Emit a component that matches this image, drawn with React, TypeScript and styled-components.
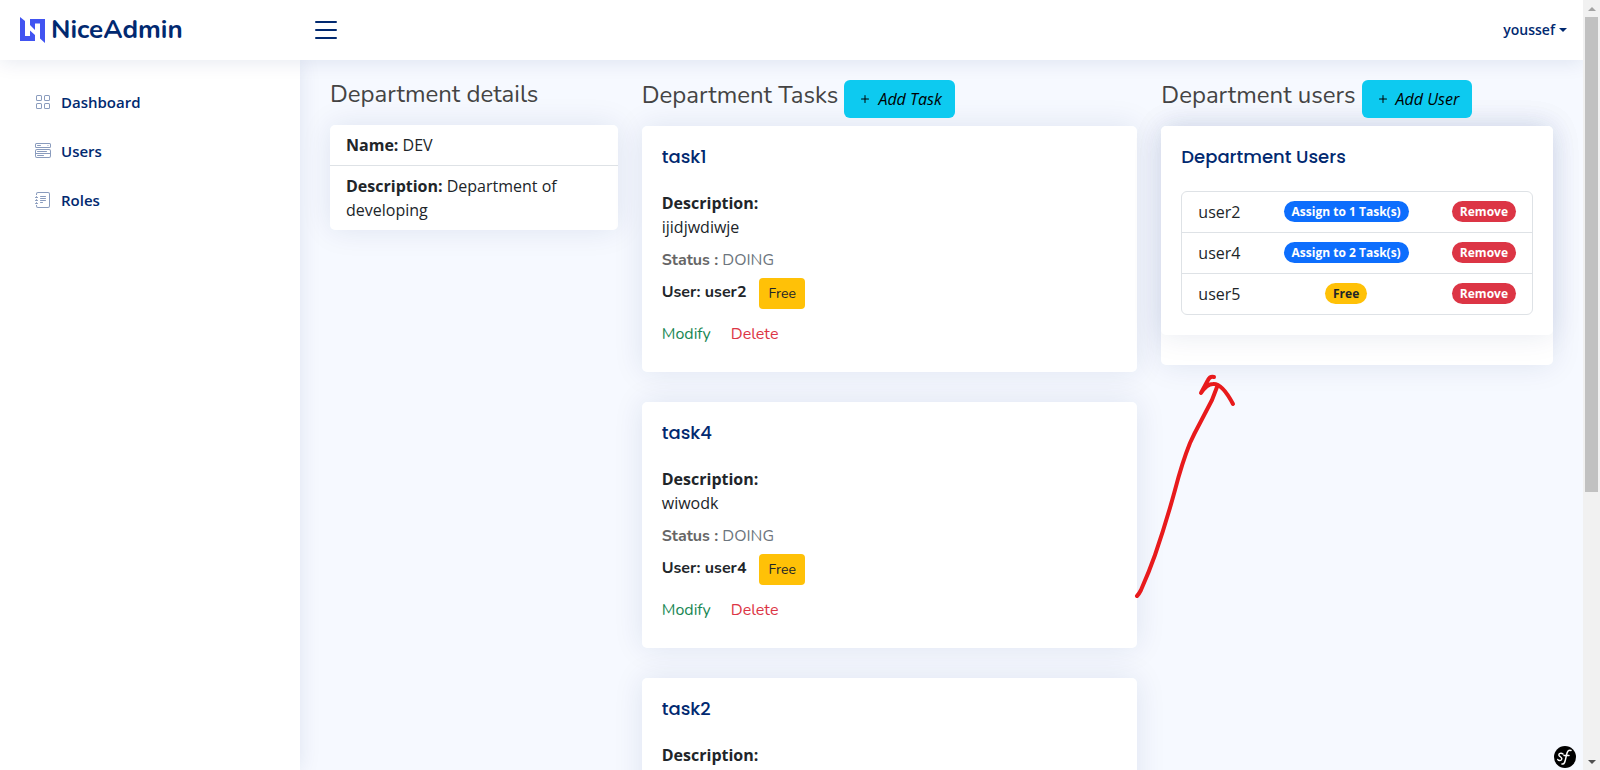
import React from 'react';
import styled, { createGlobalStyle } from 'styled-components';
import { BsGrid, BsMenuButtonWide, BsJournalText, BsList, BsPlus } from 'react-icons/bs';

const body = '"Open Sans", "Noto Sans", sans-serif';
const rounded = 'Nunito, "Open Sans", "Noto Sans", sans-serif';
const geometric = 'Poppins, Inter, "Open Sans", sans-serif';
const cardShadow = '0 0 30px rgba(1, 41, 112, 0.1)';

const GlobalStyle = createGlobalStyle`
  *, *::before, *::after { box-sizing: border-box; }
  body {
    margin: 0;
    background: #f6f9ff;
    color: #212529;
    font: 400 16px/24px ${body};
    overflow: hidden;
  }
  h1, h2, h3, p, ul { margin: 0; padding: 0; }
  ul { list-style: none; }
  a { text-decoration: none; }
  button { font-family: inherit; border: 0; cursor: pointer; }
`;

const Shell = styled.div`
  display: grid;
  grid-template-columns: 1fr 17px;
  height: 100vh;
`;

const Page = styled.div`
  display: grid;
  grid-template: 60px minmax(0, 1fr) / 300px minmax(0, 1fr);
  min-height: 0;
  position: relative;
  overflow: hidden;
`;

const Header = styled.header`
  grid-column: 1 / -1;
  display: flex;
  align-items: center;
  padding: 0 16px 0 20px;
  background: #fff;
  box-shadow: 0 2px 20px rgba(1, 41, 112, 0.1);
  z-index: 3;
`;

const Brand = styled.a`
  display: flex;
  align-items: center;
  gap: 6px;
  width: 290px;
  color: #012970;
  font: 700 26px/30px ${rounded};
`;

const MenuButton = styled.button`
  display: flex;
  padding: 0;
  background: none;
  color: #012970;
`;

const Account = styled.button`
  display: flex;
  align-items: center;
  gap: 4px;
  margin-left: auto;
  padding: 0;
  background: none;
  color: #012970;
  font-size: 14px;
  font-weight: 600;
  line-height: 24px;
`;

const Caret = styled.span`
  border: 4px solid transparent;
  border-top-color: currentColor;
  border-bottom: 0;
`;

const Sidebar = styled.nav`
  padding: 20px;
  background: #fff;
  box-shadow: 0 0 20px rgba(1, 41, 112, 0.1);
  z-index: 2;
`;

const NavList = styled.ul`
  display: grid;
  gap: 5px;
`;

const NavLink = styled.a`
  display: flex;
  align-items: center;
  gap: 10px;
  height: 44px;
  padding: 0 15px;
  color: #012970;
  font-size: 15px;
  font-weight: 600;

  svg { color: #899bbd; }
`;

const Main = styled.main`
  display: grid;
  grid-template-columns: 3fr 5fr 4fr;
  align-items: start;
  padding: 20px 18px;
  min-height: 0;
  overflow-y: auto;
  scrollbar-width: none;
`;

const Column = styled.section`
  position: relative;
  min-width: 0;
  padding: 0 12px;
`;

const ColumnHead = styled.div`
  display: flex;
  align-items: center;
  gap: 6px;
  margin-bottom: 8px;
`;

const Heading = styled.h1`
  padding-bottom: 8px;
  color: #444;
  font: 400 24px/29px ${rounded};
  white-space: nowrap;
`;

const AddButton = styled.button`
  display: flex;
  align-items: center;
  gap: 5px;
  height: 38px;
  padding: 0 13px;
  border-radius: 6px;
  background: #0dcaf0;
  color: #000;
  font-size: 16px;
  font-style: italic;
  font-weight: 400;
  white-space: nowrap;
`;

const Details = styled.ul`
  border-radius: 5px;
  background: #fff;
  box-shadow: ${cardShadow};
`;

const Detail = styled.li`
  padding: 8px 16px;

  & + & { border-top: 1px solid #dee2e6; }
`;

const Strong = styled.strong`
  font-weight: 700;
`;

const Card = styled.article`
  margin-bottom: 30px;
  padding: 0 20px 20px;
  border-radius: 5px;
  background: #fff;
  box-shadow: ${cardShadow};
`;

const CardTitle = styled.h2`
  padding: 20px 0 23px;
  color: #012970;
  font: 500 18px/22px ${geometric};
`;

const Status = styled.p`
  margin-top: 8px;
  color: #6c757d;
  font-family: ${rounded};
  line-height: 26px;

  strong { color: #666; font-weight: 700; }
`;

const UserRow = styled.div`
  display: flex;
  gap: 13px;
  margin: 5px 0 13px;
  font: 700 16px/28px ${rounded};
`;

const FreeButton = styled.button`
  height: 31px;
  padding: 0 9px;
  border-radius: 4px;
  background: #ffc107;
  color: #212529;
  font: 400 14px/21px ${rounded};
`;

const Actions = styled.div`
  display: flex;
  gap: 20px;
  padding-bottom: 6px;
`;

const Action = styled.a<{ $color: string }>`
  color: ${(p) => p.$color};
  font: 400 16px/24px ${rounded};
`;

const UsersWrap = styled.div`
  padding-bottom: 30px;
  border-radius: 5px;
  background: #fff;
  box-shadow: ${cardShadow};

  ${Card} { margin: 0; }
`;

const UserList = styled.ul`
  border: 1px solid #dee2e6;
  border-radius: 6px;
`;

const UserItem = styled.li`
  display: flex;
  align-items: flex-start;
  justify-content: space-between;
  padding: 8px 16px;

  & + & { border-top: 1px solid #dee2e6; }
`;

const pill = `
  margin-top: 1px;
  padding: 4px 8px;
  border-radius: 12px;
  font: 700 12px/13px ${body};
`;

const Badge = styled.span<{ $free?: boolean }>`
  ${pill}
  background: ${(p) => (p.$free ? '#ffc107' : '#0d6efd')};
  color: ${(p) => (p.$free ? '#212529' : '#fff')};
`;

const RemoveButton = styled.button`
  ${pill}
  background: #dc3545;
  color: #fff;
`;

const Arrow = styled.svg`
  position: absolute;
  left: -19px;
  top: 290px;
  z-index: 1;
  pointer-events: none;
`;

const DebugBadge = styled.button`
  position: absolute;
  right: 7px;
  bottom: 2px;
  display: flex;
  padding: 0;
  background: none;
  z-index: 4;
`;

const ScrollTrack = styled.div`
  display: grid;
  grid-template-rows: 17px minmax(0, 475fr) minmax(0, 261fr) 17px;
  justify-items: center;
  background: #f1f1f1;
`;

const ScrollThumb = styled.div`
  width: 13px;
  background: #c1c1c1;
`;

const ScrollArrow = styled.span<{ $down?: boolean }>`
  align-self: center;
  border: 4px solid transparent;
  ${(p) =>
    p.$down
      ? 'grid-row: 4; border-top-color: #505050; border-bottom: 0;'
      : 'border-bottom-color: #a3a3a3; border-top: 0;'}
`;

const tasks = [
  { name: 'task1', description: 'ijidjwdiwje', status: 'DOING', user: 'user2' },
  { name: 'task4', description: 'wiwodk', status: 'DOING', user: 'user4' },
  { name: 'task2', description: 'wiwodk', status: 'DOING', user: 'user4' },
];

const users = [
  { name: 'user2', tasks: 1 },
  { name: 'user4', tasks: 2 },
  { name: 'user5', tasks: 0 },
];

const nav = [
  { label: 'Dashboard', Icon: BsGrid },
  { label: 'Users', Icon: BsMenuButtonWide },
  { label: 'Roles', Icon: BsJournalText },
];

const Logo = () => (
  <svg width="25" height="26" viewBox="0 0 25 26" aria-hidden="true">
    <path fill="#4154f1" d="M0 0 5 4V19H10V13.500L15 18V24H0Z" />
    <path fill="#4154f1" d="M10 2H25V26L20 21.500V6.500H15V13L10 8Z" />
  </svg>
);

export default function App() {
  return (
    <>
      <GlobalStyle />
      <Shell>
        <Page>
          <Header>
            <Brand href="#"><Logo />NiceAdmin</Brand>
            <MenuButton aria-label="Toggle sidebar"><BsList size={32} /></MenuButton>
            <Account>youssef<Caret /></Account>
          </Header>
          <Sidebar>
            <NavList>
              {nav.map(({ label, Icon }) => (
                <li key={label}><NavLink href="#"><Icon size={16} />{label}</NavLink></li>
              ))}
            </NavList>
          </Sidebar>
          <Main>
            <Column>
              <ColumnHead><Heading>Department details</Heading></ColumnHead>
              <Details>
                <Detail><Strong>Name:</Strong> DEV</Detail>
                <Detail><Strong>Description:</Strong> Department of developing</Detail>
              </Details>
            </Column>
            <Column>
              <ColumnHead>
                <Heading>Department Tasks</Heading>
                <AddButton><BsPlus size={16} />Add Task</AddButton>
              </ColumnHead>
              {tasks.map((t) => (
                <Card key={t.name}>
                  <CardTitle>{t.name}</CardTitle>
                  <p><Strong>Description:</Strong><br />{t.description}</p>
                  <Status><strong>Status :</strong> {t.status}</Status>
                  <UserRow>User: {t.user}<FreeButton>Free</FreeButton></UserRow>
                  <Actions>
                    <Action href="#" $color="#198754">Modify</Action>
                    <Action href="#" $color="#dc3545">Delete</Action>
                  </Actions>
                </Card>
              ))}
            </Column>
            <Column>
              <ColumnHead>
                <Heading>Department users</Heading>
                <AddButton><BsPlus size={16} />Add User</AddButton>
              </ColumnHead>
              <UsersWrap>
                <Card>
                  <CardTitle>Department Users</CardTitle>
                  <UserList>
                    {users.map((u) => (
                      <UserItem key={u.name}>
                        {u.name}
                        <Badge $free={!u.tasks}>{u.tasks ? `Assign to ${u.tasks} Task(s)` : 'Free'}</Badge>
                        <RemoveButton>Remove</RemoveButton>
                      </UserItem>
                    ))}
                  </UserList>
                </Card>
              </UsersWrap>
              <Arrow width="110" height="235" viewBox="1130 370 110 235" fill="none" stroke="#e81a1c" strokeWidth="4" strokeLinecap="round" strokeLinejoin="round" aria-hidden="true">
                <path d="M1137 596Q1139 594 1141 590Q1149 572 1155 555Q1166 523 1175 490Q1182 463 1190 443Q1194 434 1200 423L1212 400L1217 387" />
                <path d="M1214 377Q1210 376 1208 380L1201 393Q1207 384 1213 384Q1222 383 1233 404" />
              </Arrow>
            </Column>
          </Main>
          <DebugBadge aria-label="Open profiler toolbar">
            <svg width="22" height="22" viewBox="0 0 22 22" aria-hidden="true">
              <circle cx="11" cy="11" r="11" fill="#000" />
              <path d="M9 8C7 6.500 4.500 7.500 5 9.300C5.500 10.800 8 11 7.800 13C7.500 15 4.500 15 3.800 13.500M8 18C11 19 11.500 13 12.500 9C13.200 5.500 14.500 3.500 17 4.500M10 9.500H15" fill="none" stroke="#fff" strokeWidth="1.500" strokeLinecap="round" />
            </svg>
          </DebugBadge>
        </Page>
        <ScrollTrack aria-hidden="true">
          <ScrollArrow />
          <ScrollThumb />
          <ScrollArrow $down />
        </ScrollTrack>
      </Shell>
    </>
  );
}
